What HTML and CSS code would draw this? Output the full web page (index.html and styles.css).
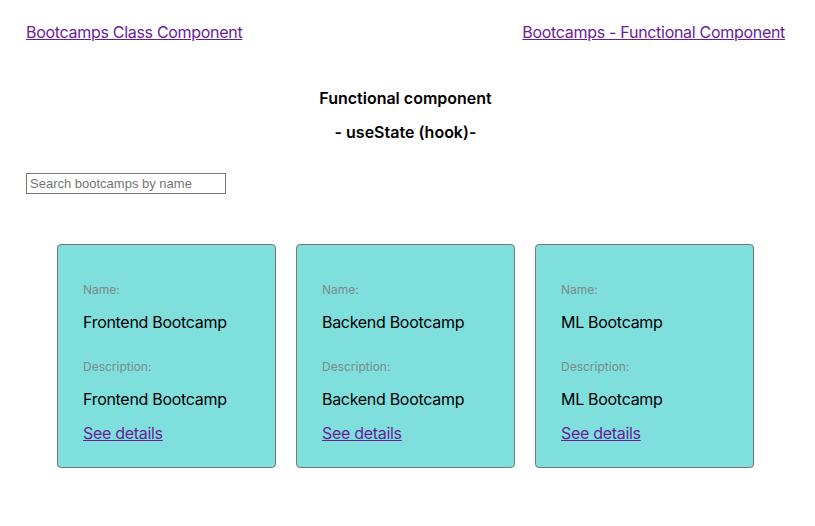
FILE: index.html
```html
<!DOCTYPE html>
<html>
<head>
<meta charset="utf-8">
<link rel="stylesheet" href="styles.css">
</head>
<body>
<div class="page">
  <nav class="nav">
    <a href="#">Bootcamps Class Component</a>
    <a href="#">Bootcamps - Functional Component</a>
  </nav>
  <h1 class="title">Functional component</h1>
  <h2 class="subtitle">- useState (hook)-</h2>
  <input class="search" type="text" placeholder="Search bootcamps by name">
  <div class="cards">
    <div class="card">
      <div class="label">Name:</div>
      <div class="value">Frontend Bootcamp</div>
      <div class="label label-desc">Description:</div>
      <div class="value">Frontend Bootcamp</div>
      <a class="details" href="#">See details</a>
    </div>
    <div class="card">
      <div class="label">Name:</div>
      <div class="value">Backend Bootcamp</div>
      <div class="label label-desc">Description:</div>
      <div class="value">Backend Bootcamp</div>
      <a class="details" href="#">See details</a>
    </div>
    <div class="card">
      <div class="label">Name:</div>
      <div class="value">ML Bootcamp</div>
      <div class="label label-desc">Description:</div>
      <div class="value">ML Bootcamp</div>
      <a class="details" href="#">See details</a>
    </div>
  </div>
</div>
</body>
</html>
```
FILE: styles.css
```css
html, body {
  margin: 0;
  padding: 0;
  background: #fff;
}
body {
  font-family: Inter, Roboto, "Noto Sans", sans-serif;
  color: #000;
}
.page {
  padding: 23px 30px 0 26px;
}
a {
  color: #6a1b9a;
  text-decoration: underline;
}
.nav {
  display: flex;
  justify-content: space-between;
  font-size: 16px;
  line-height: 19px;
  letter-spacing: -0.3px;
}
.title {
  margin: 47px 0 0;
  font-size: 16px;
  line-height: 19px;
  font-weight: 600;
  text-align: center;
}
.subtitle {
  margin: 15px 0 0;
  font-size: 16px;
  line-height: 19px;
  font-weight: 600;
  text-align: center;
}
.search {
  display: block;
  margin: 31px 0 0;
  box-sizing: border-box;
  width: 200px;
  height: 21px;
  padding: 1px 3px;
  border: 1px solid #767676;
  border-radius: 0;
  font-family: "Liberation Sans", Arial, sans-serif;
  font-size: 13px;
}
.search::placeholder {
  color: #757575;
}
.cards {
  display: flex;
  justify-content: center;
  gap: 20px;
  margin-top: 50px;
}
.card {
  box-sizing: border-box;
  width: 219px;
  height: 224px;
  background: #7fdfdd;
  border: 1px solid #777;
  border-radius: 4px;
  padding: 38px 25px 0;
  display: flex;
  flex-direction: column;
  align-items: flex-start;
}
.label {
  font-size: 12px;
  line-height: 14px;
  color: #7b8a8a;
}
.value {
  font-size: 16px;
  line-height: 19px;
  margin-top: 16px;
  letter-spacing: -0.3px;
}
.label-desc {
  margin-top: 28px;
}
.details {
  font-size: 16px;
  line-height: 19px;
  margin-top: 15px;
  letter-spacing: -0.3px;
}
```
